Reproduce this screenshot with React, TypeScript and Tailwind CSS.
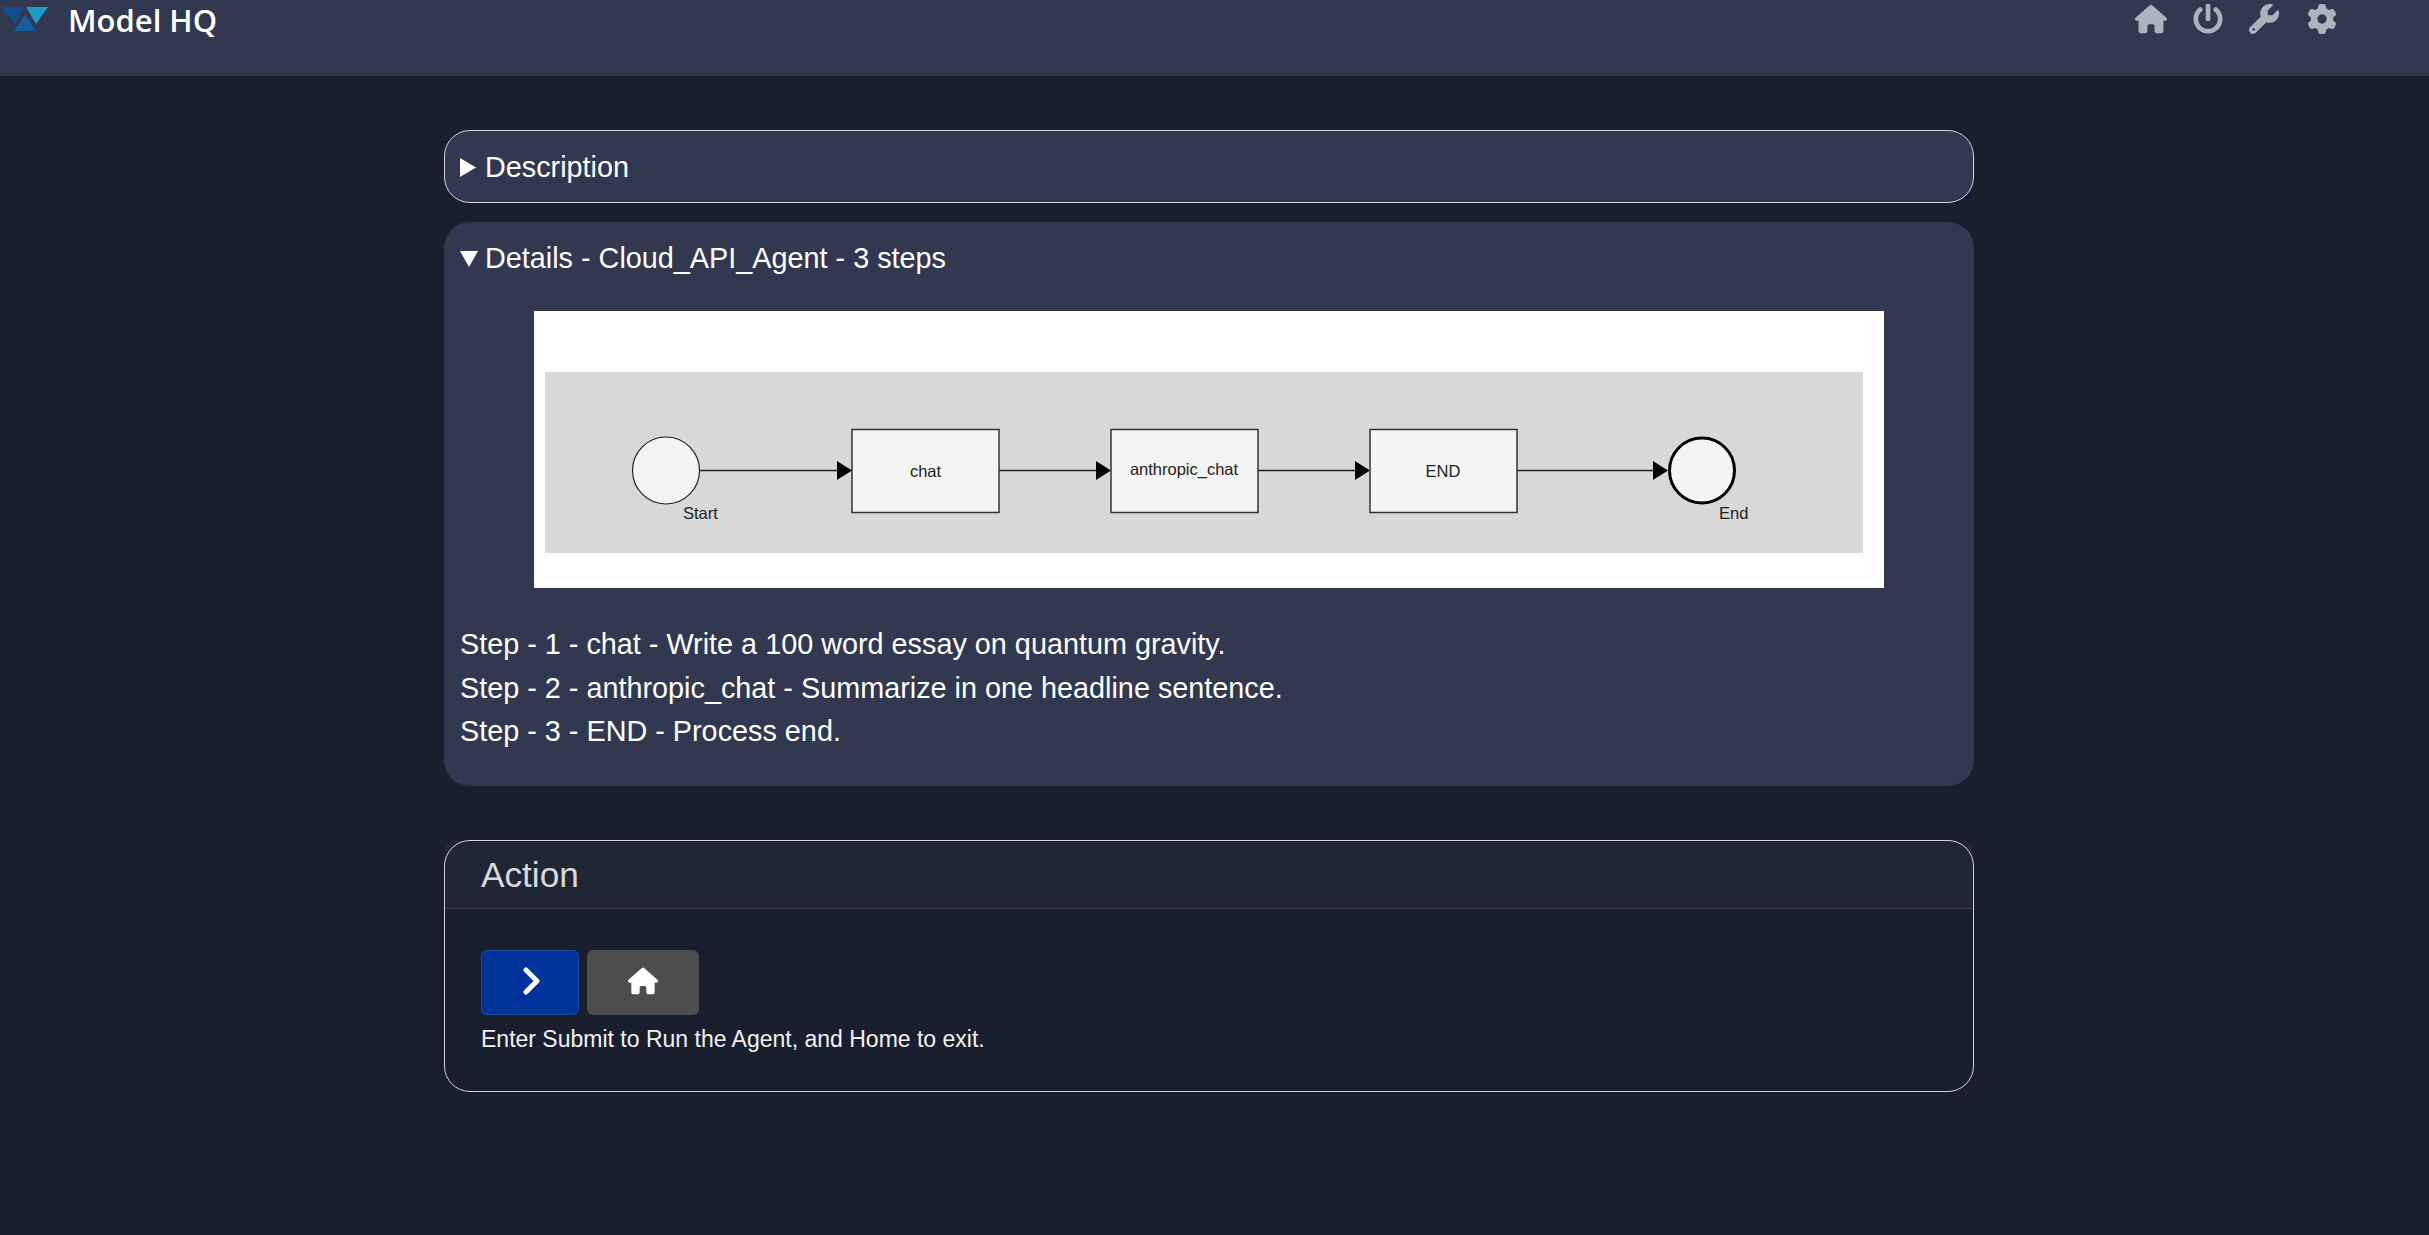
import { FaPowerOff } from 'react-icons/fa';
import { FaGear, FaHouse, FaWrench } from 'react-icons/fa6';

const boxes = [
    { x: 852, width: 147, label: 'chat', labelX: 925.5, labelY: 477 },
    { x: 1111, width: 147, label: 'anthropic_chat', labelX: 1184, labelY: 475 },
    { x: 1370, width: 147, label: 'END', labelX: 1443, labelY: 477 },
];

const arrows = [
    { from: 700, to: 852 },
    { from: 999, to: 1111 },
    { from: 1258, to: 1370 },
    { from: 1517, to: 1668 },
];

const steps = [
    'Step - 1 - chat - Write a 100 word essay on quantum gravity.',
    'Step - 2 - anthropic_chat - Summarize in one headline sentence.',
    'Step - 3 - END - Process end.',
];

function Logo() {
    return (
        <svg width="48" height="26" viewBox="0 0 48 26" className="shrink-0">
            <polygon points="1,1 23,1 14,18" fill="#0f4f8f" />
            <polygon points="25,1 47,1 35,18" fill="#1c9ccb" />
            <polygon points="24,8 35,25 13,25" fill="#155a9f" />
        </svg>
    );
}

function Diagram() {
    return (
        <svg viewBox="534 311 1350 277" className="block w-[1350px] h-[277px] bg-white" fontFamily="'Liberation Sans', Arial, sans-serif" fontSize="16.5">
            <rect x="545" y="372" width="1318" height="181" fill="#d8d8d8" />
            {arrows.map((a) => (
                <g key={a.from}>
                    <line x1={a.from} y1="470.5" x2={a.to - 10} y2="470.5" stroke="#222222" strokeWidth="1.5" />
                    <polygon points={`${a.to - 15},461 ${a.to},470.5 ${a.to - 15},480`} fill="#000000" />
                </g>
            ))}
            <circle cx="666" cy="470.5" r="33.5" fill="#f4f4f4" stroke="#222222" strokeWidth="1.2" />
            <circle cx="1702" cy="470.5" r="32.5" fill="#f4f4f4" stroke="#000000" strokeWidth="3" />
            {boxes.map((b) => (
                <g key={b.label}>
                    <rect x={b.x} y="429.5" width={b.width} height="83" fill="#f4f4f4" stroke="#333333" strokeWidth="1.5" />
                    <text x={b.labelX} y={b.labelY} textAnchor="middle" fill="#222222">{b.label}</text>
                </g>
            ))}
            <text x="683" y="519" fill="#222222">Start</text>
            <text x="1719" y="519" fill="#222222">End</text>
        </svg>
    );
}

export default function App() {
    return (
        <div className="min-h-screen bg-[#1a1f2e] font-['Liberation_Sans',Arial,sans-serif] text-white">
            <header className="h-[76px] bg-[#31384f] flex justify-between items-start">
                <div className="flex items-start pl-px pt-[6px]">
                    <Logo />
                    <span className="ml-[19px] -mt-[7px] font-['Open_Sans',sans-serif] font-semibold text-[31px] leading-[42px]">Model HQ</span>
                </div>
                <div className="flex items-start gap-[26px] pt-[3px] pr-[92px] text-[#adb3bd] text-[30px]">
                    <FaHouse className="text-[32px]" />
                    <FaPowerOff className="mt-px" />
                    <FaWrench className="mt-px" />
                    <FaGear className="mt-px ml-[2px]" />
                </div>
            </header>

            <main className="w-[2418px] pt-[54px]">
                <div className="w-[1530px] mx-auto">
                    <details className="border border-[#d0d3da] rounded-[26px] bg-[#31384f] px-[15px] pt-[15px] pb-[13px] text-[28.8px] leading-[43.2px]">
                        <summary className="list-none flex items-center gap-[9px]">
                            <svg width="16" height="19" viewBox="0 0 16 19" className="shrink-0">
                                <polygon points="0,0 16,9.5 0,19" fill="#ffffff" />
                            </svg>
                            <span>Description</span>
                        </summary>
                    </details>

                    <details open className="mt-[19px] border border-transparent rounded-[26px] bg-[#31384f] px-[15px] pt-[14px] pb-[32px] text-[28.8px] leading-[43.2px]">
                        <summary className="list-none flex items-center gap-[7px]">
                            <svg width="18" height="16" viewBox="0 0 18 16" className="shrink-0">
                                <polygon points="0,0 18,0 9,16" fill="#ffffff" />
                            </svg>
                            <span>Details - Cloud_API_Agent - 3 steps</span>
                        </summary>
                        <div className="mt-[31px] ml-[74px]">
                            <Diagram />
                        </div>
                        <div className="mt-[35px]">
                            {steps.map((s) => (
                                <div key={s}>{s}</div>
                            ))}
                        </div>
                    </details>

                    <section className="relative mt-[54px] h-[252px] border border-transparent after:content-[''] after:absolute after:-inset-px after:border after:border-[#d0d3da] after:rounded-[26px] after:pointer-events-none">
                        <div className="h-[68px] bg-[#212634] rounded-t-[8px] border-b border-[#3d414d] pl-9 flex items-center">
                            <h2 className="text-[35.2px] leading-none text-[#d9d9d9]">Action</h2>
                        </div>
                        <div className="pl-9 pt-[41px]">
                            <div className="flex gap-2">
                                <button className="w-[98px] h-[65px] pb-1 pl-1 rounded-md bg-[#003399] border border-[#1d4a9e] flex items-center justify-center">
                                    <svg width="18" height="28" viewBox="0 0 18 28">
                                        <polyline points="3,3 14,14 3,25" fill="none" stroke="#ffffff" strokeWidth="5" strokeLinecap="round" strokeLinejoin="round" />
                                    </svg>
                                </button>
                                <button className="w-[112px] h-[65px] pb-1 rounded-md bg-[#4d4d4d] flex items-center justify-center text-[30px]">
                                    <FaHouse />
                                </button>
                            </div>
                            <p className="mt-[6px] text-[23px] leading-9 text-[#f2f2f2]">Enter Submit to Run the Agent, and Home to exit.</p>
                        </div>
                    </section>
                </div>
            </main>
        </div>
    );
}
